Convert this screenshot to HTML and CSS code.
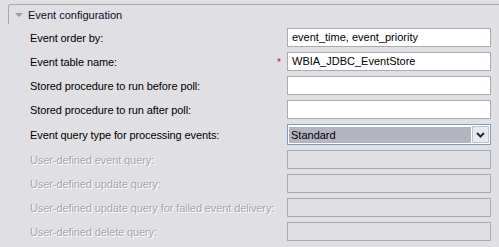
FILE: index.html
```html
<!DOCTYPE html>
<html lang="en">
<head>
    <meta charset="UTF-8">
    <title>Event configuration</title>
    <link rel="stylesheet" href="styles.css">
</head>
<body>
    <div class="section">
        <div class="section-head">
            <span class="twisty"></span>
            <span class="section-title">Event configuration</span>
        </div>

        <div class="rows">
            <div class="row">
                <label class="label">Event order by:</label>
                <span class="req"></span>
                <div class="field">event_time, event_priority</div>
            </div>
            <div class="row">
                <label class="label">Event table name:</label>
                <span class="req">*</span>
                <div class="field">WBIA_JDBC_EventStore</div>
            </div>
            <div class="row">
                <label class="label">Stored procedure to run before poll:</label>
                <span class="req"></span>
                <div class="field"></div>
            </div>
            <div class="row">
                <label class="label">Stored procedure to run after poll:</label>
                <span class="req"></span>
                <div class="field"></div>
            </div>
            <div class="row row-combo">
                <label class="label">Event query type for processing events:</label>
                <span class="req"></span>
                <div class="combo">
                    <div class="combo-value">Standard</div>
                    <div class="combo-btn">
                        <svg width="9" height="6" viewBox="0 0 9 6">
                            <path d="M1 1 L4.5 4.5 L8 1" fill="none" stroke="#2b2b2b" stroke-width="2"/>
                        </svg>
                    </div>
                </div>
            </div>
            <div class="row disabled">
                <label class="label">User-defined event query:</label>
                <span class="req"></span>
                <div class="field"></div>
            </div>
            <div class="row disabled">
                <label class="label">User-defined update query:</label>
                <span class="req"></span>
                <div class="field"></div>
            </div>
            <div class="row disabled">
                <label class="label">User-defined update query for failed event delivery:</label>
                <span class="req"></span>
                <div class="field"></div>
            </div>
            <div class="row disabled">
                <label class="label">User-defined delete query:</label>
                <span class="req"></span>
                <div class="field"></div>
            </div>
        </div>
    </div>
</body>
</html>
```

FILE: styles.css
```css
* {
    margin: 0;
    padding: 0;
    box-sizing: border-box;
}

body {
    background-color: #e0dfe3;
    color: #000;
    font-family: 'Liberation Sans', Arial, sans-serif;
    font-size: 11px;
    width: 499px;
    height: 247px;
    overflow: hidden;
}

.section {
    padding: 4px 0 0 8px;
}

.section-head {
    display: flex;
    align-items: center;
    height: 20px;
    border-top: 1px solid #a9a9ad;
    border-left: 1px solid #a9a9ad;
    border-top-left-radius: 3px;
    padding-left: 6px;
}

.twisty {
    width: 0;
    height: 0;
    border-left: 4px solid transparent;
    border-right: 4px solid transparent;
    border-top: 4px solid #9c9ca4;
    margin-right: 5px;
    margin-top: 1px;
}

.section-title {
    color: #0c0c28;
}

.rows {
    display: flex;
    flex-direction: column;
    gap: 5px;
    padding: 4px 8px 0 22px;
}

.row {
    display: grid;
    grid-template-columns: minmax(0, 1fr) 10px 204px;
    align-items: center;
    height: 19px;
}

.row-combo {
    height: 21px;
}

.label {
    white-space: nowrap;
    letter-spacing: -0.1px;
}

.req {
    color: #a8302c;
    font-size: 10px;
    line-height: 1;
    padding-top: 3px;
}

.field {
    height: 19px;
    border: 1px solid #a5acb2;
    background: #fff;
    padding: 0 4px;
    line-height: 17px;
    color: #000;
    white-space: nowrap;
    overflow: hidden;
}

.combo {
    display: flex;
    align-items: center;
    height: 21px;
    border: 1px solid #7f9db9;
    background: #fff;
    padding: 1px;
}

.combo-value {
    flex: 1;
    height: 16px;
    line-height: 16px;
    background: #b3b4bf;
    padding-left: 2px;
    margin-right: 1px;
}

.combo-btn {
    width: 17px;
    height: 17px;
    display: flex;
    align-items: center;
    justify-content: center;
    background: #e8e8ee;
    border: 1px solid #b8c4d8;
}

.disabled .label {
    color: #a7a6ab;
    text-shadow: 1px 1px 0 #fff;
}

.disabled .field {
    background: transparent;
}
```
